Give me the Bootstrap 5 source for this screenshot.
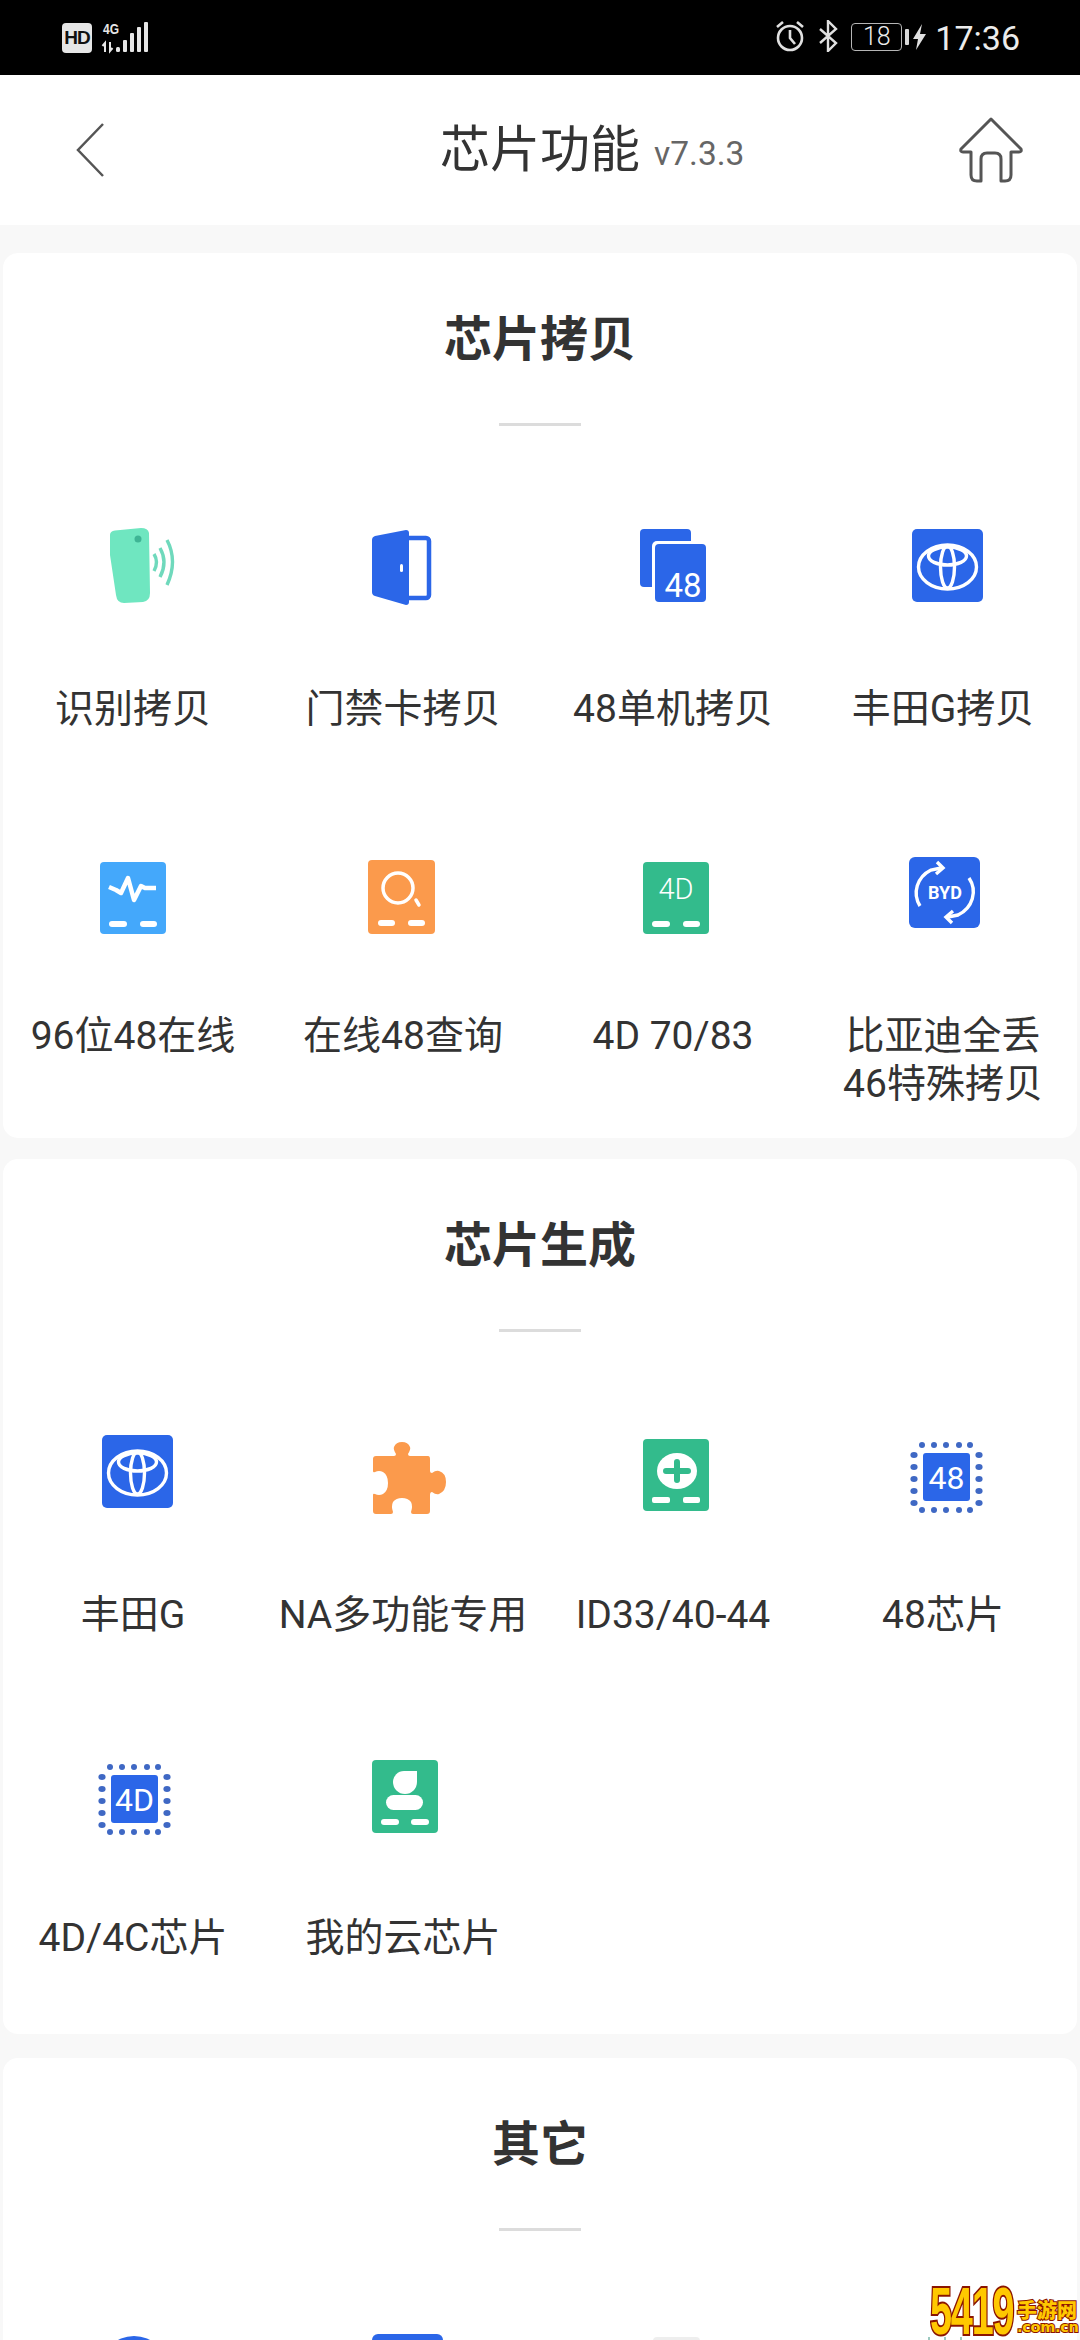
<!DOCTYPE html>
<html lang="zh">
<head>
    <meta charset="utf-8">
    <title>芯片功能</title>
    <link href="https://cdn.jsdelivr.net/npm/bootstrap@5.3.3/dist/css/bootstrap.min.css" rel="stylesheet">
    <style>
        html, body { height: 2340px; }
        body {
            width: 1080px;
            overflow: hidden;
            position: relative;
            background-color: #f8f8f8;
            color: #333;
            font-family: Roboto, "Noto Sans CJK SC", sans-serif;
        }
        svg { display: block; }
        .status-bar { height: 75px; padding: 20px 60px 0 62px; background: #000; color: #ececec; }
        .hd-tag {
            width: 30px; height: 30px; margin-top: 3px; border-radius: 4px;
            background: #e6e6e6; color: #111;
            font: 700 19px/30px "Liberation Sans", sans-serif; text-align: center; letter-spacing: -1px;
        }
        .bt-ico { margin-left: 13px; }
        .bolt-ico { margin: 4px 0 0 4px; }
        .batt-box {
            width: 51px; height: 28px; margin-left: 13px; margin-top: 3px;
            border: 1.5px solid #b5b5b5; border-radius: 4px;
            font-size: 25px; line-height: 25px; font-weight: 300; text-align: center;
        }
        .batt-nub { width: 4px; height: 16px; margin: 9px 0 0 3px; background: #d8d8d8; border-radius: 1px; }
        .clock { margin: 1px 0 0 9px; font-size: 34px; line-height: 34px; }
        .top-bar {
            height: 150px; background: #fff;
            display: grid; grid-template-columns: 1fr auto 1fr; align-items: center;
        }
        .page-title { font-size: 50px; line-height: 60px; font-weight: 400; color: #333; margin: 0; }
        .ver { font-size: 33.500px; color: #666; margin: 8px 0 0 14px; }
        .home-btn { margin: 0 57px 0 auto; }
        .back-btn { margin-left: 75px; }
        .sheet { padding: 28px 3px 0; }
        .panel { border-radius: 15px; margin-bottom: 22px; }
        .panel-copy { margin-bottom: 21px; }
        .panel-gen { margin-bottom: 24px; }
        .sec-title { font-size: 48px; line-height: 60px; font-weight: 700; color: #333; margin: 0; padding-top: 57px; }
        .sec-rule { width: 82px; height: 3px; margin: 53px auto 89px; background: #dcdcdc; }
        .fn-grid { margin: 0 -1px 0 -5px; row-gap: 35px; }
        .panel-copy .fn-grid { row-gap: 37px; }
        .panel-gen .fn-grid { row-gap: 33px; }
        .fn-cell { min-height: 290px; padding-bottom: 30px; }
        .fn-ico { width: 100px; height: 100px; margin: 0 auto 70px; }
        .fn-name { font-size: 39px; line-height: 48px; color: #333; }
        .ico-txt { font-family: Roboto, sans-serif; fill: #fff; }
        .wm { position: absolute; right: 0; top: 2284px; width: 150px; height: 54px; display: flex; }
        .wm-num {
            width: 87px; flex: none;
            font: 900 66px/54px "Liberation Sans", sans-serif; letter-spacing: -2px;
            transform: scaleX(.6); transform-origin: left center;
            color: #ffc800; -webkit-text-stroke: 4px #8b1500; paint-order: stroke fill;
            white-space: nowrap; overflow: visible; max-width: 87px;
        }
        .wm-cn {
            margin-top: 16px; white-space: nowrap;
            font: 900 20px/20px "Noto Sans CJK SC", sans-serif;
            color: #ffc800; -webkit-text-stroke: 2px #8b1500; paint-order: stroke fill;
        }
        .wm-dom {
            white-space: nowrap;
            font: 700 14.500px/15px "DejaVu Sans", sans-serif; letter-spacing: -.3px;
            color: #ffc800; -webkit-text-stroke: 2px #8b1500; paint-order: stroke fill;
        }
    </style>
</head>

<body>

<svg width="0" height="0" class="position-absolute">
    <defs>
        <symbol id="toyota" viewBox="0 0 100 100">
            <rect x="19" y="14" width="71" height="73" rx="5" fill="#2b66e8"/>
            <g fill="none" stroke="#fff" stroke-width="3.400">
                <ellipse cx="54.500" cy="52" rx="29" ry="22"/>
                <ellipse cx="54.500" cy="41" rx="19" ry="9"/>
                <ellipse cx="54.500" cy="52" rx="7" ry="21"/>
            </g>
        </symbol>
        <symbol id="chipdots" viewBox="0 0 100 100">
            <g fill="#3f68c4">
                <circle cx="27" cy="23" r="3"/><circle cx="39" cy="23" r="3"/><circle cx="51" cy="23" r="3"/><circle cx="64" cy="23" r="3"/><circle cx="75" cy="23" r="3"/>
                <circle cx="27" cy="88" r="3"/><circle cx="39" cy="88" r="3"/><circle cx="51" cy="88" r="3"/><circle cx="64" cy="88" r="3"/><circle cx="75" cy="88" r="3"/>
                <ellipse cx="19" cy="33" rx="3.600" ry="3"/><ellipse cx="19" cy="45" rx="3.600" ry="3"/><ellipse cx="19" cy="57" rx="3.600" ry="3"/><ellipse cx="19" cy="69" rx="3.600" ry="3"/><ellipse cx="19" cy="81" rx="3.600" ry="3"/>
                <ellipse cx="84" cy="33" rx="3.600" ry="3"/><ellipse cx="84" cy="45" rx="3.600" ry="3"/><ellipse cx="84" cy="57" rx="3.600" ry="3"/><ellipse cx="84" cy="69" rx="3.600" ry="3"/><ellipse cx="84" cy="81" rx="3.600" ry="3"/>
            </g>
            <rect x="28" y="31" width="47" height="48" rx="3" fill="#2b66e8"/>
        </symbol>
    </defs>
</svg>

<!-- 状态栏 -->
<div class="status-bar d-flex justify-content-between align-items-start">
    <div class="d-flex">
        <div class="hd-tag">HD</div>
        <svg width="55" height="36" viewBox="0 0 55 36" class="ms-2">
            <text x="3" y="14" fill="#e6e6e6" font-family="Liberation Sans" font-size="15" font-weight="700" textLength="16" lengthAdjust="spacingAndGlyphs">4G</text>
            <path d="M5 32V23l-2.500 3M10 22v9l2.500-3" fill="none" stroke="#e6e6e6" stroke-width="2"/>
            <g fill="#e6e6e6">
                <rect x="16" y="27" width="4" height="5" rx="1.500"/>
                <rect x="23" y="20" width="4" height="12" rx="1"/>
                <rect x="30" y="13" width="4" height="19" rx="1"/>
                <rect x="37" y="7" width="4" height="25" rx="1"/>
                <rect x="44" y="2" width="4" height="30" rx="1"/>
            </g>
        </svg>
    </div>
    <div class="d-flex">
        <svg width="30" height="32" viewBox="0 0 30 32" fill="none" stroke="#e0e0e0" stroke-width="2.600">
            <circle cx="15" cy="18" r="12"/>
            <path d="M15 10v8l5 6M2 7l6-5M28 7l-6-5"/>
        </svg>
        <svg class="bt-ico" width="20" height="32" viewBox="0 0 20 32" fill="none" stroke="#e0e0e0" stroke-width="2.400">
            <path d="M2 9l16 14-8 8V1l8 8L2 23"/>
        </svg>
        <div class="batt-box">18</div>
        <div class="batt-nub"></div>
        <svg class="bolt-ico" width="13" height="26" viewBox="0 0 13 26"><path d="M9 0L0 15h5l-2 11 10-16H7z" fill="#e0e0e0"/></svg>
        <div class="clock">17:36</div>
    </div>
</div>

<!-- 标题栏 -->
<nav class="top-bar">
    <svg class="back-btn" width="30" height="54" viewBox="0 0 30 54" fill="none" stroke="#555" stroke-width="2.500"><path d="M28 1L3 27l25 26"/></svg>
    <h1 class="page-title">芯片功能</h1>
    <div class="d-flex align-items-center">
        <span class="ver">v7.3.3</span>
        <svg class="home-btn" width="64" height="66" viewBox="0 0 64 66" fill="none" stroke="#555" stroke-width="3" stroke-linejoin="round">
            <path d="M32 2L62 32q1 3-2 3H52V58q0 6-6 6H42V42q0-6-6-6H28q-6 0-6 6V64H18q-6 0-6-6V35H4q-3 0-2-3z"/>
        </svg>
    </div>
</nav>

<div class="sheet">

    <!-- 芯片拷贝 -->
    <section class="panel panel-copy card border-0 text-center">
        <h2 class="sec-title">芯片拷贝</h2>
        <div class="sec-rule"></div>
        <div class="fn-grid row row-cols-4 g-0">
            <div class="fn-cell">
                <svg class="fn-ico" viewBox="0 0 100 100">
                    <path d="M27 20q0-4 5-4.500L58 13q7 0 8 5l1 60q0 8-7 9l-19 1q-7 0-8-8L27 40z" fill="#6fe6c0"/>
                    <circle cx="55" cy="24" r="3.500" fill="#3fb595"/>
                    <path d="M71 39q5 8 0 17M77 33q8 14 0 29M84 25q11 21 0 45" fill="none" stroke="#6fd9bc" stroke-width="3.400"/>
                </svg>
                <div class="fn-name">识别拷贝</div>
            </div>
            <div class="fn-cell">
                <svg class="fn-ico" viewBox="0 0 100 100">
                    <rect x="50" y="23" width="26" height="60" rx="3" fill="none" stroke="#2b66e8" stroke-width="4.500"/>
                    <path d="M19 25q0-3 3-4L53 15q3 0 3 3V87q0 3-3 3L22 81q-3-1-3-4z" fill="#2b66e8"/>
                    <rect x="47" y="49" width="3" height="8" rx="1.500" fill="#fff"/>
                </svg>
                <div class="fn-name">门禁卡拷贝</div>
            </div>
            <div class="fn-cell">
                <svg class="fn-ico" viewBox="0 0 100 100">
                    <rect x="17" y="14" width="51" height="58" rx="4" fill="#2b66e8"/>
                    <rect x="29" y="26" width="57" height="64" rx="5" fill="#fff"/>
                    <rect x="32" y="29" width="51" height="58" rx="4" fill="#2b66e8"/>
                    <text class="ico-txt" x="60" y="82" font-size="33" text-anchor="middle">48</text>
                </svg>
                <div class="fn-name">48单机拷贝</div>
            </div>
            <div class="fn-cell">
                <svg class="fn-ico"><use href="#toyota" width="100" height="100"/></svg>
                <div class="fn-name">丰田G拷贝</div>
            </div>
            <div class="fn-cell">
                <svg class="fn-ico" viewBox="0 0 100 100">
                    <rect x="17" y="20" width="66" height="72" rx="4" fill="#44a8fb"/>
                    <path d="M26 45l7 3 5 3 7-15 6 22 7-14 4 2h11" fill="none" stroke="#fff" stroke-width="4.500" stroke-linejoin="round"/>
                    <rect x="26" y="79" width="18" height="6" rx="3" fill="#fff"/>
                    <rect x="57" y="79" width="17" height="6" rx="3" fill="#fff"/>
                </svg>
                <div class="fn-name">96位48在线</div>
            </div>
            <div class="fn-cell">
                <svg class="fn-ico" viewBox="0 0 100 100">
                    <rect x="15" y="18" width="67" height="74" rx="4" fill="#fb9a4c"/>
                    <circle cx="45" cy="46" r="15" fill="none" stroke="#fff" stroke-width="3.500"/>
                    <path d="M63 58l3 5" stroke="#fff" stroke-width="3.500" stroke-linecap="round"/>
                    <rect x="25" y="78" width="17" height="6" rx="3" fill="#fff"/>
                    <rect x="55" y="78" width="17" height="6" rx="3" fill="#fff"/>
                </svg>
                <div class="fn-name">在线48查询</div>
            </div>
            <div class="fn-cell">
                <svg class="fn-ico" viewBox="0 0 100 100">
                    <rect x="20" y="20" width="66" height="72" rx="4" fill="#33bb8c"/>
                    <text class="ico-txt" x="53" y="57" font-size="29" font-weight="300" text-anchor="middle">4D</text>
                    <rect x="29" y="79" width="18" height="6" rx="3" fill="#fff"/>
                    <rect x="60" y="79" width="17" height="6" rx="3" fill="#fff"/>
                </svg>
                <div class="fn-name">4D 70/83</div>
            </div>
            <div class="fn-cell">
                <svg class="fn-ico" viewBox="0 0 100 100">
                    <rect x="16" y="15" width="71" height="71" rx="6" fill="#2b66e8"/>
                    <path d="M27 64A28 26 0 0 1 38 28l10-2M76 36A28 26 0 0 1 65 73l-10 2" fill="none" stroke="#fff" stroke-width="3.400"/>
                    <path d="M44 20l6 6-7 6M59 81l-6-6 7-6" fill="none" stroke="#fff" stroke-width="3.400"/>
                    <text class="ico-txt" x="52" y="56.500" font-size="18" font-weight="700" text-anchor="middle">BYD</text>
                </svg>
                <div class="fn-name">比亚迪全丢<br>46特殊拷贝</div>
            </div>
        </div>
    </section>

    <!-- 芯片生成 -->
    <section class="panel panel-gen card border-0 text-center">
        <h2 class="sec-title">芯片生成</h2>
        <div class="sec-rule"></div>
        <div class="fn-grid row row-cols-4 g-0">
            <div class="fn-cell">
                <svg class="fn-ico"><use href="#toyota" width="100" height="100"/></svg>
                <div class="fn-name">丰田G</div>
            </div>
            <div class="fn-cell">
                <svg class="fn-ico" viewBox="0 0 100 100">
                    <path d="M20 38q0-3 3-3H41q2 0 2-2-3-5-2-7 2-5 8-5t8 5q1 2-2 7 0 2 2 2H75q2 0 2 3V50q0 2 2 2 4-3 7-2 7 2 7 11t-7 12q-3 1-7-2-2 0-2 3V90q0 3-3 3H60q-2 0-2-2 2-6 0-10-3-4-9-4t-9 4q-2 4 0 10 0 2-2 2H23q-3 0-3-3V74q0-2 2-1 4 2 8 0 5-3 5-11t-5-11q-4-2-8 0-2 1-2-1z" fill="#fb9a4c"/>
                </svg>
                <div class="fn-name">NA多功能专用</div>
            </div>
            <div class="fn-cell">
                <svg class="fn-ico" viewBox="0 0 100 100">
                    <rect x="20" y="18" width="66" height="72" rx="4" fill="#33bb8c"/>
                    <ellipse cx="54" cy="50" rx="20" ry="18" fill="#fff"/>
                    <path d="M54 41v18M43 50h22" stroke="#33bb8c" stroke-width="6" stroke-linecap="round"/>
                    <rect x="29" y="76" width="18" height="6" rx="2" fill="#fff"/>
                    <rect x="60" y="76" width="17" height="6" rx="2" fill="#fff"/>
                </svg>
                <div class="fn-name">ID33/40-44</div>
            </div>
            <div class="fn-cell">
                <svg class="fn-ico" viewBox="0 0 100 100">
                    <use href="#chipdots" width="100" height="100" x="2" y="1"/>
                    <text class="ico-txt" x="53.500" y="68" font-size="32" text-anchor="middle">48</text>
                </svg>
                <div class="fn-name">48芯片</div>
            </div>
            <div class="fn-cell">
                <svg class="fn-ico" viewBox="0 0 100 100">
                    <use href="#chipdots" width="100" height="100"/>
                    <text class="ico-txt" x="51.500" y="66.500" font-size="32" text-anchor="middle">4D</text>
                </svg>
                <div class="fn-name">4D/4C芯片</div>
            </div>
            <div class="fn-cell">
                <svg class="fn-ico" viewBox="0 0 100 100">
                    <rect x="19" y="16" width="66" height="73" rx="4" fill="#33bb8c"/>
                    <path d="M40 38a11 11 0 0 1 11-11H64V38A11 11 0 0 1 40 38z" fill="#fff"/>
                    <rect x="33" y="51" width="37" height="15" rx="7.500" fill="#fff"/>
                    <rect x="28" y="75" width="18" height="6" rx="3" fill="#fff"/>
                    <rect x="58" y="75" width="18" height="6" rx="3" fill="#fff"/>
                </svg>
                <div class="fn-name">我的云芯片</div>
            </div>
        </div>
    </section>

    <!-- 其它 -->
    <section class="panel card border-0 text-center">
        <h2 class="sec-title">其它</h2>
        <div class="sec-rule"></div>
        <div class="fn-grid row row-cols-4 g-0">
            <div class="fn-cell">
                <svg class="fn-ico" viewBox="0 0 100 100"><circle cx="51" cy="50" r="34" fill="#2b66e8"/></svg>
            </div>
            <div class="fn-cell">
                <svg class="fn-ico" viewBox="0 0 100 100"><rect x="19" y="14" width="71" height="73" rx="6" fill="#2b66e8"/></svg>
            </div>
            <div class="fn-cell">
                <svg class="fn-ico" viewBox="0 0 100 100"><rect x="30" y="17" width="47" height="60" rx="4" fill="#eee"/></svg>
            </div>
            <div class="fn-cell">
                <svg class="fn-ico" viewBox="0 0 100 100"><path d="M36 17v12M52 17v12M68 17v12" stroke="#9cc9c0" stroke-width="2"/></svg>
            </div>
        </div>
    </section>
</div>

<!-- 水印 -->
<div class="wm">
    <div class="wm-num">5419</div>
    <div>
        <div class="wm-cn">手游网</div>
        <div class="wm-dom">.com.cn</div>
    </div>
</div>

<script src="https://cdn.jsdelivr.net/npm/bootstrap@5.3.3/dist/js/bootstrap.bundle.min.js"></script>
</body>

</html>
